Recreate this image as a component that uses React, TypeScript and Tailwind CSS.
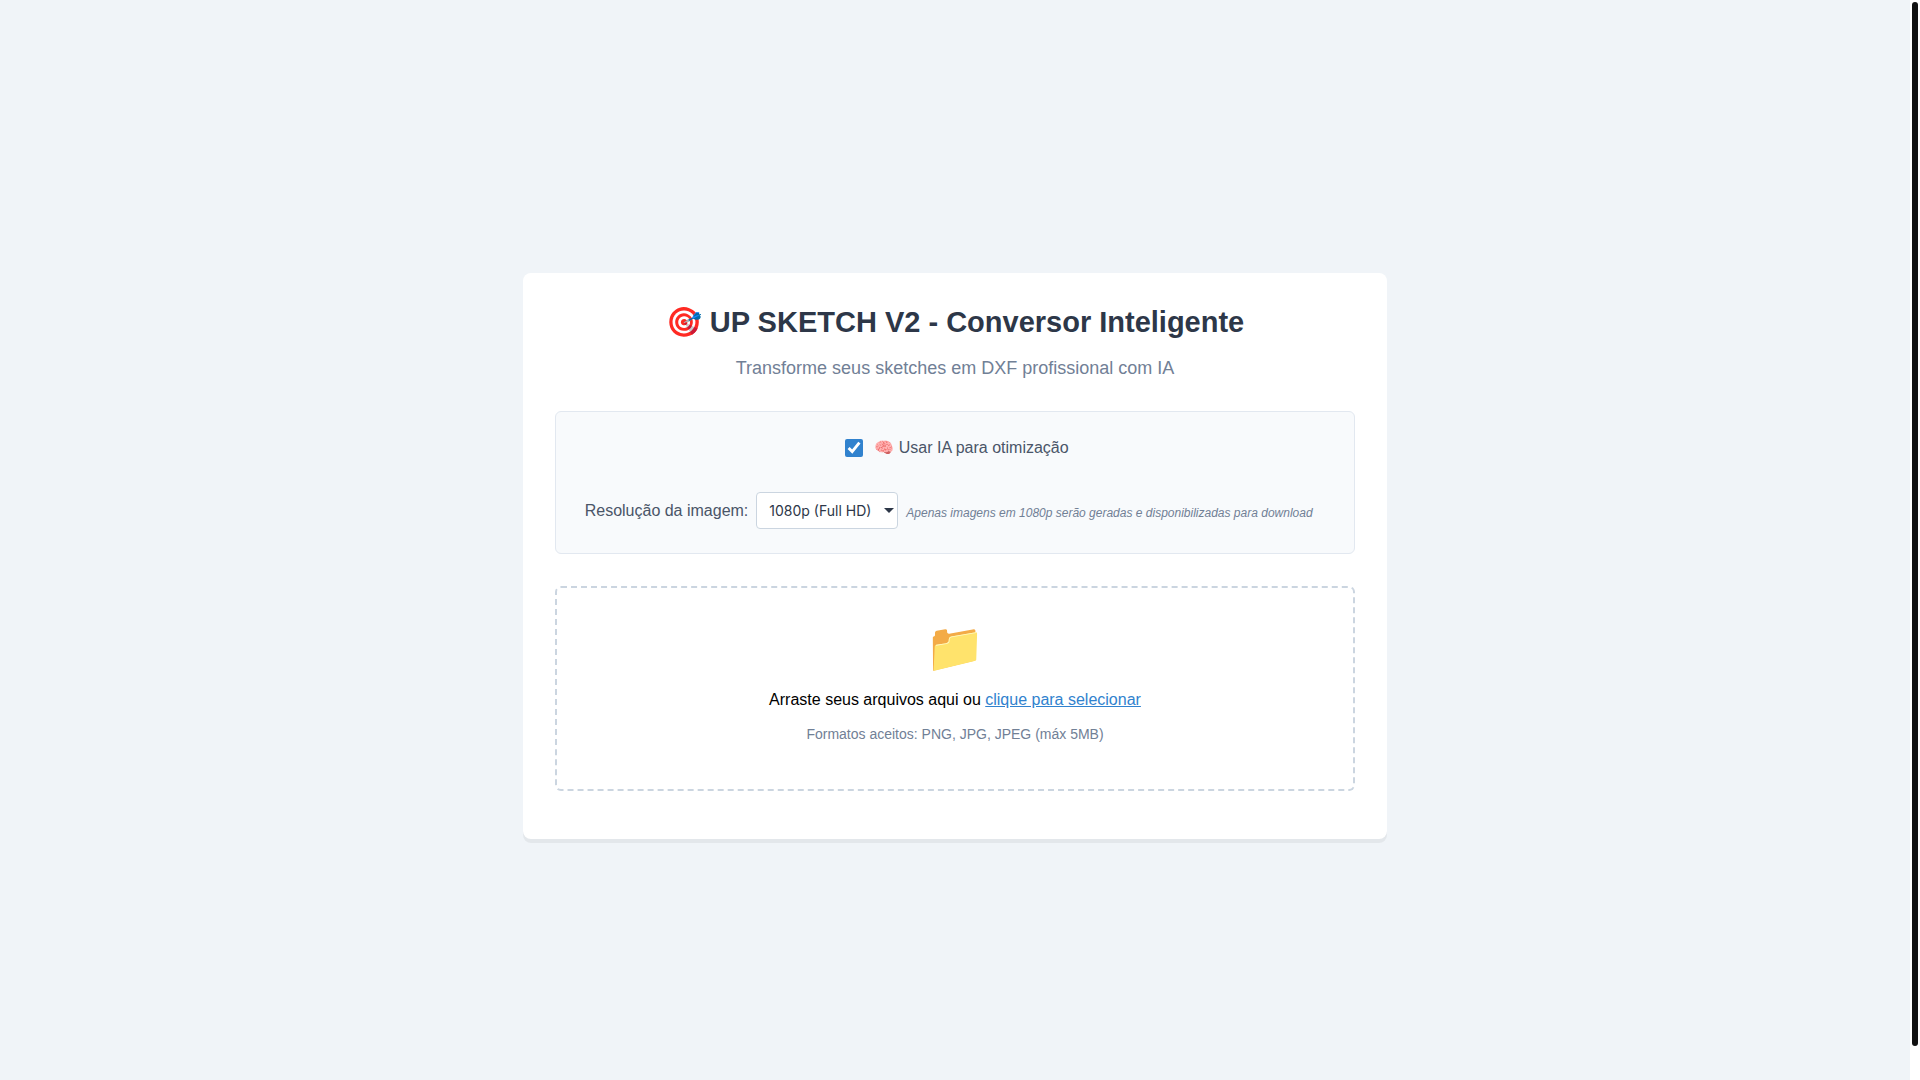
import React, { useRef, useState } from "react";

export default function App() {
  const [useAI, setUseAI] = useState(true);
  const [resolution, setResolution] = useState("1080p");
  const fileInput = useRef<HTMLInputElement>(null);

  const handleSelectFile = (e: React.MouseEvent) => {
    e.preventDefault();
    fileInput.current?.click();
  };

  return (
    <div className="flex h-screen bg-white font-['Liberation_Sans',Arial,sans-serif] text-base text-black">
      {/* Page */}
      <main className="flex-1 overflow-y-auto bg-[#f0f4f8] [scrollbar-width:none]">
        <div className="flex min-h-[calc(100vh+32px)] items-center justify-center">
          <div className="w-full max-w-[864px] rounded-lg bg-white px-8 pt-8 pb-12 text-center shadow-[0_4px_0_rgba(0,0,0,0.05)]">
            <h1 className="text-[29px] leading-[34px] font-bold text-[#2d3748]">
              🎯 UP SKETCH V2 - Conversor Inteligente
            </h1>
            <p className="mt-4 mb-[30px] text-lg leading-[26px] text-[#718096]">
              Transforme seus sketches em DXF profissional com IA
            </p>

            {/* Options */}
            <div className="mb-8 flex flex-col items-center gap-8 rounded-md border border-[#e2e8f0] bg-[#f8fafc] p-6 text-[#4a5568]">
              <label className="flex items-center gap-[11px] pl-1">
                <input
                  type="checkbox"
                  checked={useAI}
                  onChange={(e) => setUseAI(e.target.checked)}
                  className="size-[18px] accent-[#3182ce]"
                />
                <span>🧠 Usar IA para otimização</span>
              </label>
              <div className="flex items-center gap-2">
                <label htmlFor="resolution">Resolução da imagem:</label>
                <div className="relative">
                  <select
                    id="resolution"
                    value={resolution}
                    onChange={(e) => setResolution(e.target.value)}
                    className="h-[37px] w-[142px] appearance-none rounded border border-[#cbd5e0] bg-white pr-6 pl-3 font-['Inter',sans-serif] text-sm text-[#2d3748]"
                  >
                    <option value="1080p">1080p (Full HD)</option>
                  </select>
                  {/* Arrow */}
                  <svg
                    viewBox="0 0 10 5"
                    className="pointer-events-none absolute top-4 right-1 h-[5px] w-[10px]"
                    fill="#2d3748"
                  >
                    <path d="M0 0h10L5 5z" />
                  </svg>
                </div>
                <small className="w-[419px] pt-1 text-left text-xs text-[#718096] italic">
                  Apenas imagens em 1080p serão geradas e disponibilizadas para download
                </small>
              </div>
            </div>

            {/* Upload area */}
            <div className="rounded-md border-2 border-dashed border-[#cbd5e0] px-8 pt-8 pb-[45px]">
              <div className="text-5xl leading-[56px]">📁</div>
              <p className="mt-3">
                Arraste seus arquivos aqui ou{" "}
                <a href="#" onClick={handleSelectFile} className="text-[#3182ce] underline">
                  clique para selecionar
                </a>
              </p>
              <p className="mt-3 text-sm text-[#718096]">
                Formatos aceitos: PNG, JPG, JPEG (máx 5MB)
              </p>
              <input
                ref={fileInput}
                type="file"
                accept=".png,.jpg,.jpeg"
                aria-label="Selecionar arquivos"
                className="hidden"
              />
            </div>
          </div>
        </div>
      </main>

      {/* Scrollbar */}
      <div className="w-[10px] px-[2px] py-[2px]">
        <div className="h-[97%] rounded-full bg-[#111111]" />
      </div>
    </div>
  );
}
